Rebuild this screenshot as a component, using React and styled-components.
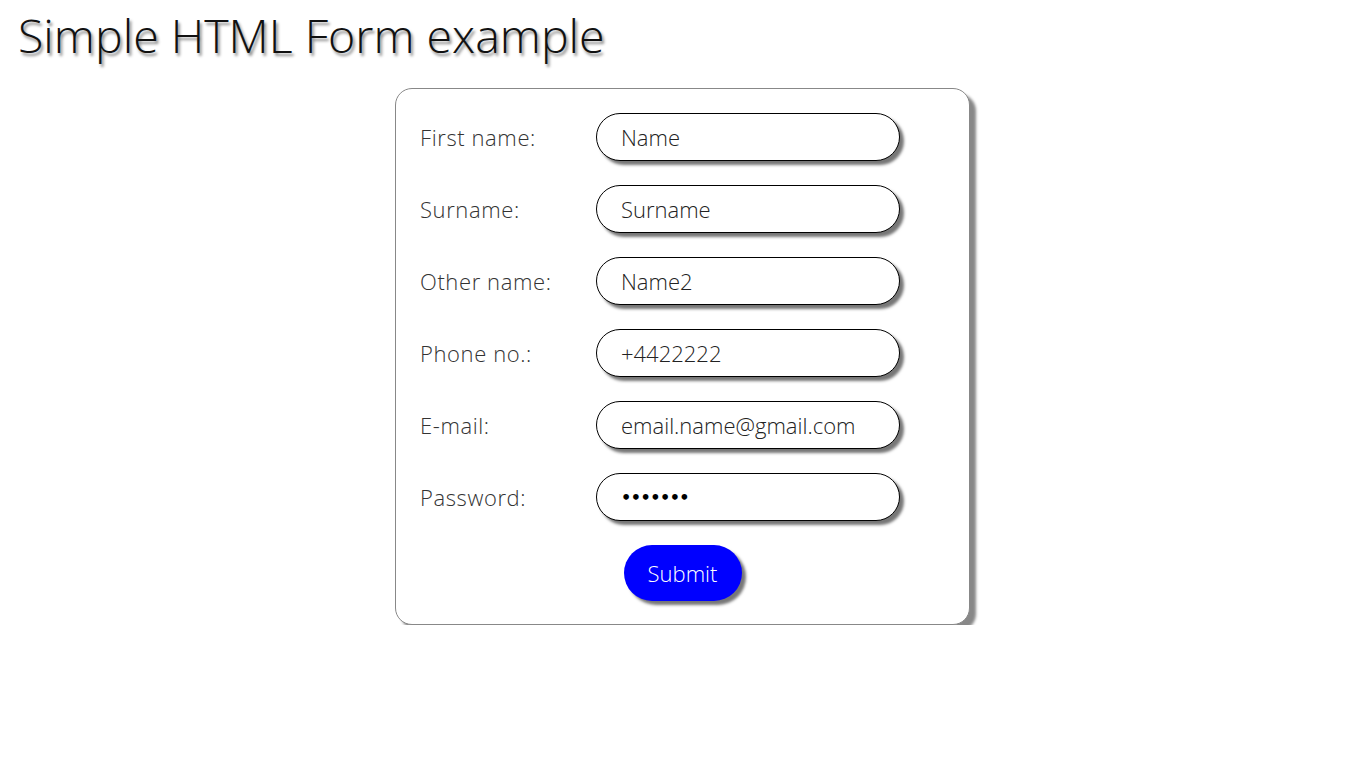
import React from "react";
import styled, { createGlobalStyle } from "styled-components";

const GlobalStyle = createGlobalStyle`
  body {
    margin: 0;
    background: #fff;
    font-family: "Open Sans", "Noto Sans", sans-serif;
    font-weight: 300;
    color: #222;
  }
`;

const Page = styled.div`
  display: flex;
  flex-direction: column;
  padding: 0 18px;
`;

const Title = styled.h1`
  margin: 5px 0 23px;
  font-size: 46.5px;
  line-height: 60px;
  font-weight: 300;
  color: #111;
  text-shadow: 2px 3px 3px #888;
`;

const Card = styled.form`
  align-self: center;
  box-sizing: border-box;
  width: 575px;
  margin-left: -1px;
  padding: 24px 24px 23px;
  border: 1px solid #888;
  border-radius: 17px;
  background: #fff;
  box-shadow: 6px 6px 3px #888;
  display: flex;
  flex-direction: column;
  gap: 24px;
`;

const Row = styled.div`
  display: grid;
  grid-template-columns: 176px 304px;
  align-items: center;
`;

const Label = styled.label`
  font-size: 22px;
  letter-spacing: 0.6px;
  color: #333;
`;

const Input = styled.input`
  box-sizing: border-box;
  height: 48px;
  width: 304px;
  padding: 0 24px;
  border: 1px solid #000;
  border-radius: 24px;
  box-shadow: 4px 4px 3px #777;
  font-family: inherit;
  font-weight: 300;
  font-size: 22px;
  color: #222;
  outline: none;
  background: #fff;

  &[type="password"] {
    font-family: "DejaVu Sans", sans-serif;
    font-weight: 700;
    font-size: 16px;
    letter-spacing: -0.5px;
    color: #000;
  }
`;

const Submit = styled.button`
  align-self: center;
  width: 118px;
  height: 56px;
  border: 0;
  border-radius: 28px;
  background: #0000ff;
  color: #fff;
  font-family: inherit;
  font-weight: 300;
  font-size: 22px;
  box-shadow: 4px 4px 3px #777;
  cursor: pointer;
`;

const fields = [
  { id: "fname", label: "First name:", type: "text", value: "Name" },
  { id: "sname", label: "Surname:", type: "text", value: "Surname" },
  { id: "oname", label: "Other name:", type: "text", value: "Name2" },
  { id: "phone", label: "Phone no.:", type: "tel", value: "+4422222" },
  { id: "email", label: "E-mail:", type: "email", value: "email.name@gmail.com" },
  { id: "pass", label: "Password:", type: "password", value: "1234567" },
];

const App = () => (
  <>
    <GlobalStyle />
    <Page>
      <Title>Simple HTML Form example</Title>
      <Card onSubmit={(e) => e.preventDefault()}>
        {fields.map((f) => (
          <Row key={f.id}>
            <Label htmlFor={f.id}>{f.label}</Label>
            <Input id={f.id} type={f.type} defaultValue={f.value} />
          </Row>
        ))}
        <Submit type="submit">Submit</Submit>
      </Card>
    </Page>
  </>
);

export default App;
